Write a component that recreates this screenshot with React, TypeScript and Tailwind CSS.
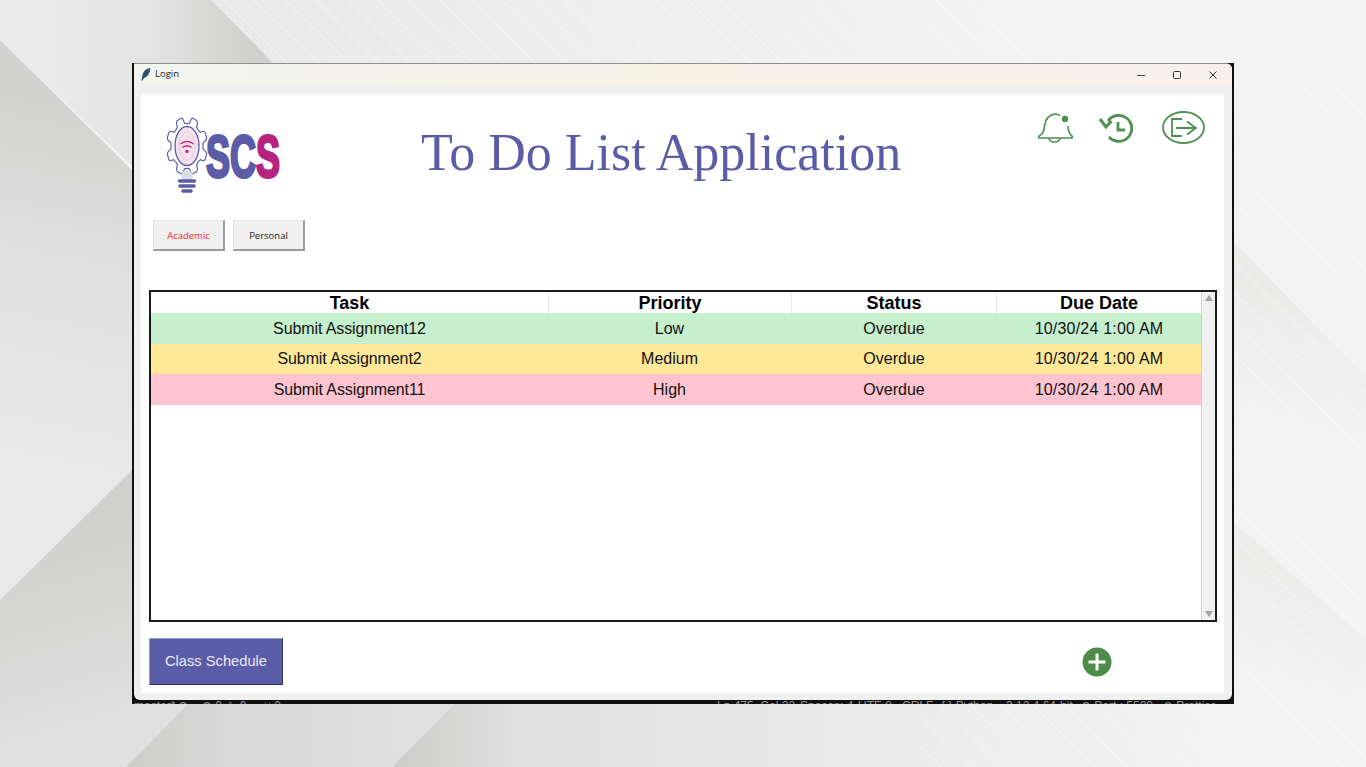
const rows = [
  { task: "Submit Assignment12", priority: "Low", bg: "bg-[#c6efce]", h: "h-[31px]" },
  { task: "Submit Assignment2", priority: "Medium", bg: "bg-[#ffe999]", h: "h-[30px]" },
  { task: "Submit Assignment11", priority: "High", bg: "bg-[#ffc4cf]", h: "h-[31px]" },
];

const stripes = Array.from({ length: 70 }, (_, i) => -800 + i * 31);

// the rounded teeth around the logo's bulb
function gearPath(cx: number, cy: number, rx: number, ry: number) {
  const teeth = 8;
  const pts: string[] = [];
  for (let i = 0; i < teeth; i++) {
    const a = ((i + 0.5) / teeth) * Math.PI * 2;
    const step = (Math.PI * 2) / teeth;
    const p = (ang: number, k: number) =>
      `${(cx + Math.cos(ang) * rx * k).toFixed(1)} ${(cy + Math.sin(ang) * ry * k).toFixed(1)}`;
    pts.push(
      `${i === 0 ? "M" : "L"}${p(a - step * 0.3, 0.8)}`,
      `Q${p(a - step * 0.24, 1)} ${p(a - step * 0.12, 1)}`,
      `L${p(a + step * 0.12, 1)}`,
      `Q${p(a + step * 0.24, 1)} ${p(a + step * 0.3, 0.8)}`,
      `Q${p(a + step * 0.5, 0.76)} ${p(a + step * 0.7, 0.8)}`
    );
  }
  return pts.join(" ") + " Z";
}

function Backdrop() {
  return (
    <svg className="absolute inset-0" width="1366" height="767" viewBox="0 0 1366 767">
      <defs>
        <linearGradient id="topLeft" gradientUnits="userSpaceOnUse" x1="0" y1="0" x2="250" y2="0">
          <stop offset="0" stopColor="#ececec" />
          <stop offset="0.6" stopColor="#e4e4e4" />
          <stop offset="1" stopColor="#d0d0ce" />
        </linearGradient>
        <linearGradient id="leftMid" gradientUnits="userSpaceOnUse" x1="70" y1="110" x2="0" y2="450">
          <stop offset="0" stopColor="#d2d2d0" />
          <stop offset="0.35" stopColor="#dedede" />
          <stop offset="1" stopColor="#e9e9e9" />
        </linearGradient>
        <linearGradient id="leftLow" gradientUnits="userSpaceOnUse" x1="66" y1="535" x2="120" y2="720">
          <stop offset="0" stopColor="#d0d0ce" />
          <stop offset="1" stopColor="#e0e0e0" />
        </linearGradient>
        <linearGradient id="bottomA" gradientUnits="userSpaceOnUse" x1="130" y1="0" x2="420" y2="0">
          <stop offset="0" stopColor="#cdcdcb" />
          <stop offset="0.35" stopColor="#d9d9d9" />
          <stop offset="1" stopColor="#e0e0e0" />
        </linearGradient>
        <linearGradient id="bottomB" gradientUnits="userSpaceOnUse" x1="395" y1="0" x2="1220" y2="0">
          <stop offset="0" stopColor="#cdcdcb" />
          <stop offset="0.15" stopColor="#e0e0e0" />
          <stop offset="0.65" stopColor="#ececec" />
          <stop offset="1" stopColor="#f3f3f3" />
        </linearGradient>
        <linearGradient id="topBand" gradientUnits="userSpaceOnUse" x1="210" y1="0" x2="1100" y2="0">
          <stop offset="0" stopColor="#e9e9e9" />
          <stop offset="1" stopColor="#f4f4f4" />
        </linearGradient>
        <linearGradient id="fold" gradientUnits="userSpaceOnUse" x1="1300" y1="300" x2="1270" y2="420">
          <stop offset="0" stopColor="#ebebea" />
          <stop offset="1" stopColor="#f3f3f3" />
        </linearGradient>
        <linearGradient id="fold2" gradientUnits="userSpaceOnUse" x1="1300" y1="575" x2="1270" y2="680">
          <stop offset="0" stopColor="#ececeb" />
          <stop offset="1" stopColor="#f3f3f3" />
        </linearGradient>
        <clipPath id="stripeArea">
          <polygon points="213,0 1366,0 1366,767 920,767 920,300 300,90" />
        </clipPath>
      </defs>
      <rect width="1366" height="767" fill="#f3f3f3" />
      <polygon points="211,0 1366,0 1366,90 272,90" fill="url(#topBand)" />
      <polygon points="0,0 211,0 272,62 272,300 0,40" fill="url(#topLeft)" />
      <polygon points="0,40 132,170 140,170 140,470 132,470 0,600" fill="url(#leftMid)" />
      <polygon points="0,600 132,470 140,470 188,704 126,767 0,767" fill="url(#leftLow)" />
      <polygon points="126,767 188,704 454,704 392,767" fill="url(#bottomA)" />
      <polygon points="392,767 454,704 1220,704 1220,767" fill="url(#bottomB)" />
      <polygon points="1220,228 1366,377 1366,767 1220,767" fill="url(#fold)" />
      <polygon points="1220,510 1366,640 1366,767 1220,767" fill="url(#fold2)" />
      <g clipPath="url(#stripeArea)" stroke="#ffffff" strokeOpacity="0.55" strokeWidth="1">
        {stripes.map((x) => (
          <line key={x} x1={x} y1="0" x2={x + 780} y2="767" />
        ))}
      </g>
    </svg>
  );
}

function Logo() {
  return (
    <svg width="116" height="82" viewBox="0 0 116 82">
      <path d={gearPath(22, 33, 20.5, 29)} fill="white" stroke="#5f60b0" strokeWidth="1.2" strokeLinejoin="round" />
      <ellipse cx="22" cy="33" rx="12" ry="19.5" fill="#f4e3ec" stroke="#5b5ca8" strokeWidth="1.3" />
      <ellipse cx="22" cy="33" rx="8" ry="14" fill="none" stroke="#d9b4cb" strokeWidth="1" strokeDasharray="1.5 1" />
      <path d="M15.5 31 q6.5 -5 13 0 M17.5 34.5 q4.5 -3.5 9 0" fill="none" stroke="#c2267f" strokeWidth="1.5" />
      <circle cx="22" cy="38.5" r="1.7" fill="#c2267f" />
      <circle cx="22" cy="63" r="6" fill="#dddde8" />
      <path d="M14.5 68 h15 M15 73 h14 M18 78 h8" stroke="#5b5ca8" strokeWidth="3.6" strokeLinecap="round" />
      <text
        transform="translate(41 64) scale(0.6 1)"
        fontFamily="'Liberation Sans', sans-serif"
        fontWeight="700"
        fontSize="60"
        strokeWidth="3"
        fill="#5b5ca8"
        stroke="#5b5ca8"
      >
        SC<tspan fill="#b5257f" stroke="#b5257f">S</tspan>
      </text>
    </svg>
  );
}

function BellIcon() {
  return (
    <svg width="38" height="32" viewBox="0 0 38 32" fill="none" stroke="#4f8f4f" strokeWidth="1.7" strokeLinejoin="round">
      <path d="M3 24 q5 -2 5.5 -10 q1 -10 10 -12 q3 0 5.5 1.5" />
      <path d="M32 14 q0 7 4 10 q1 2 -1 2 h-31 q-2 0 -1 -2" />
      <path d="M13 26 a5.5 4 0 0 0 11 0" />
      <circle cx="29" cy="7" r="3.2" fill="#4f8f4f" stroke="none" />
    </svg>
  );
}

function HistoryIcon() {
  return (
    <svg width="36" height="32" viewBox="0 0 36 32" fill="none" stroke="#4f8f4f" strokeWidth="2.8">
      <path d="M10 9 a13 13 0 1 1 1 16" />
      <path d="M2 7 L8 15 L13.5 9" strokeWidth="3" />
      <path d="M20 10 v8 h7" />
    </svg>
  );
}

function ExitIcon() {
  return (
    <svg width="44" height="34" viewBox="0 0 44 34" fill="none" stroke="#4f8f4f" strokeWidth="1.8">
      <ellipse cx="21.5" cy="16.5" rx="20.5" ry="15.5" />
      <path d="M20 8 H10 V25 H20" />
      <path d="M14 17 H34 M25 10.5 L34 17 L25 23.5" />
    </svg>
  );
}

function PlusIcon() {
  return (
    <svg width="30" height="30" viewBox="0 0 30 30">
      <circle cx="15" cy="15" r="14.5" fill="#4c8c48" />
      <path d="M15 6.5 v17 M6.5 15 h17" stroke="white" strokeWidth="3" />
    </svg>
  );
}

function TabButton({ label, active }: { label: string; active?: boolean }) {
  return (
    <button
      className={`w-[72px] h-[31px] pt-[2px] bg-[#f0f0f0] border-b-2 border-r-2 border-[#9a9a9a] border-t border-l border-t-[#e4e4e4] border-l-[#e4e4e4] text-[9.5px] font-['Open_Sans',sans-serif] ${active ? "text-[#ff2a2a]" : "text-[#222222]"}`}
    >
      {label}
    </button>
  );
}

export default function App() {
  return (
    <div className="relative w-[1366px] h-[767px] overflow-hidden font-['Liberation_Sans',sans-serif]">
      <Backdrop />
      <div className="relative pt-[63px] pl-[132px]">
        <div className="w-[1102px] h-[641px] bg-[#111111] px-[2px]">
          <div className="h-[637px] bg-[#f0f0f0] border-t border-[#8f8f8f] rounded-tr-[6px] rounded-b-[6px] flex flex-col overflow-hidden">
            {/* title bar */}
            <div className="h-[21px] bg-gradient-to-r from-[#f2f4ef] via-[#f6f2e6] to-[#f9f0ec] flex items-center pl-[7px] text-[#222222]">
              <svg width="10" height="13" viewBox="0 0 10 13">
                <path d="M9.5 0 Q3 0.5 1.5 7 L0.5 12.5 L1.5 12.5 L3 10 Q8.5 8 9.5 0 Z" fill="#33506e" />
              </svg>
              <span className="ml-[4px] text-[9.5px] font-['Open_Sans',sans-serif]">Login</span>
              <div className="ml-auto flex items-center h-full">
                <svg className="mr-[26px]" width="10" height="10" viewBox="0 0 10 10">
                  <path d="M1 5.5 h8" stroke="#444444" strokeWidth="1" />
                </svg>
                <svg className="mr-[26px]" width="10" height="10" viewBox="0 0 10 10">
                  <rect x="1.5" y="1.5" width="7" height="7" rx="1" fill="none" stroke="#333333" strokeWidth="1" />
                </svg>
                <svg className="mr-[14px]" width="10" height="10" viewBox="0 0 10 10">
                  <path d="M1.5 1.5 L8.5 8.5 M8.5 1.5 L1.5 8.5" stroke="#333333" strokeWidth="1" />
                </svg>
              </div>
            </div>

            {/* content */}
            <div className="mt-[9px] mx-[7px] w-[1083px] h-[599px] bg-white flex flex-col">
              <div className="relative h-[126px]">
                <div className="absolute left-[24px] top-[19px]">
                  <Logo />
                </div>
                <div className="absolute left-[280px] top-[27px] text-[52px] leading-[64px] text-[#5b5ca8] font-['Liberation_Serif',serif] whitespace-nowrap">
                  To Do List Application
                </div>
                <div className="absolute left-[895px] top-[17px] flex items-center">
                  <BellIcon />
                  <div className="ml-[24px]">
                    <HistoryIcon />
                  </div>
                  <div className="ml-[28px]">
                    <ExitIcon />
                  </div>
                </div>
              </div>

              <div className="flex gap-2 pl-[12px]">
                <TabButton label="Academic" active />
                <TabButton label="Personal" />
              </div>

              {/* table */}
              <div className="mt-[39px] ml-[8px] w-[1068px] h-[332px] border-2 border-[#1a1a1a] flex">
                <div className="w-[1050px] flex flex-col">
                  <div className="flex h-[21px] pt-[1px] text-[18px] leading-[21px] font-bold text-black">
                    <div className="w-[398px] text-center border-r border-[#e6e6e6]">Task</div>
                    <div className="w-[243px] text-center border-r border-[#e6e6e6]">Priority</div>
                    <div className="w-[205px] text-center border-r border-[#e6e6e6]">Status</div>
                    <div className="w-[204px] text-center">Due Date</div>
                  </div>
                  {rows.map((r) => (
                    <div key={r.task} className={`flex items-center text-[16px] text-[#111111] ${r.bg} ${r.h}`}>
                      <div className="w-[397px] text-center tracking-[-0.1px]">{r.task}</div>
                      <div className="w-[243px] text-center">{r.priority}</div>
                      <div className="w-[206px] text-center">Overdue</div>
                      <div className="w-[204px] text-center tracking-[0.2px]">10/30/24 1:00 AM</div>
                    </div>
                  ))}
                </div>
                <div className="w-[14px] bg-[#f0f0f0] border-l border-[#cfcfcf] flex flex-col items-center justify-between py-[3px]">
                  <svg width="8" height="6" viewBox="0 0 8 6"><path d="M4 0 L8 6 H0 Z" fill="#a3a3a3" /></svg>
                  <svg width="8" height="6" viewBox="0 0 8 6"><path d="M0 0 H8 L4 6 Z" fill="#a3a3a3" /></svg>
                </div>
              </div>

              {/* bottom row */}
              <div className="mt-[16px] ml-[8px] flex items-center">
                <button className="w-[134px] h-[47px] bg-[#5b5ca8] border border-[#33335e] border-t-[#9a9ad8] border-l-[#9a9ad8] text-[#e9e9f7] text-[14.7px]">
                  Class Schedule
                </button>
                <div className="ml-[799px]">
                  <PlusIcon />
                </div>
              </div>
            </div>
          </div>

          {/* editor status bar showing through behind the window */}
          <div className="h-[4px] overflow-hidden flex text-[12px] leading-[12px] text-[#9a9a9a] whitespace-nowrap">
            <span className="w-[68px] shrink-0">master* ⟳</span>
            <span className="w-[62px] shrink-0">⊗ 0 ⚠ 0</span>
            <span className="w-[453px] shrink-0">⑂ 0</span>
            <span className="w-[83px] shrink-0">Ln 475, Col 22</span>
            <span className="w-[58px] shrink-0">Spaces: 4</span>
            <span className="w-[44px] shrink-0">UTF-8</span>
            <span className="w-[39px] shrink-0">CRLF</span>
            <span className="w-[65px] shrink-0">{"{ }"} Python</span>
            <span className="w-[75px] shrink-0">3.12.4 64-bit</span>
            <span className="w-[82px] shrink-0">⊘ Port : 5500</span>
            <span className="w-[55px] shrink-0">⊘ Prettier</span>
          </div>
        </div>
      </div>
    </div>
  );
}
